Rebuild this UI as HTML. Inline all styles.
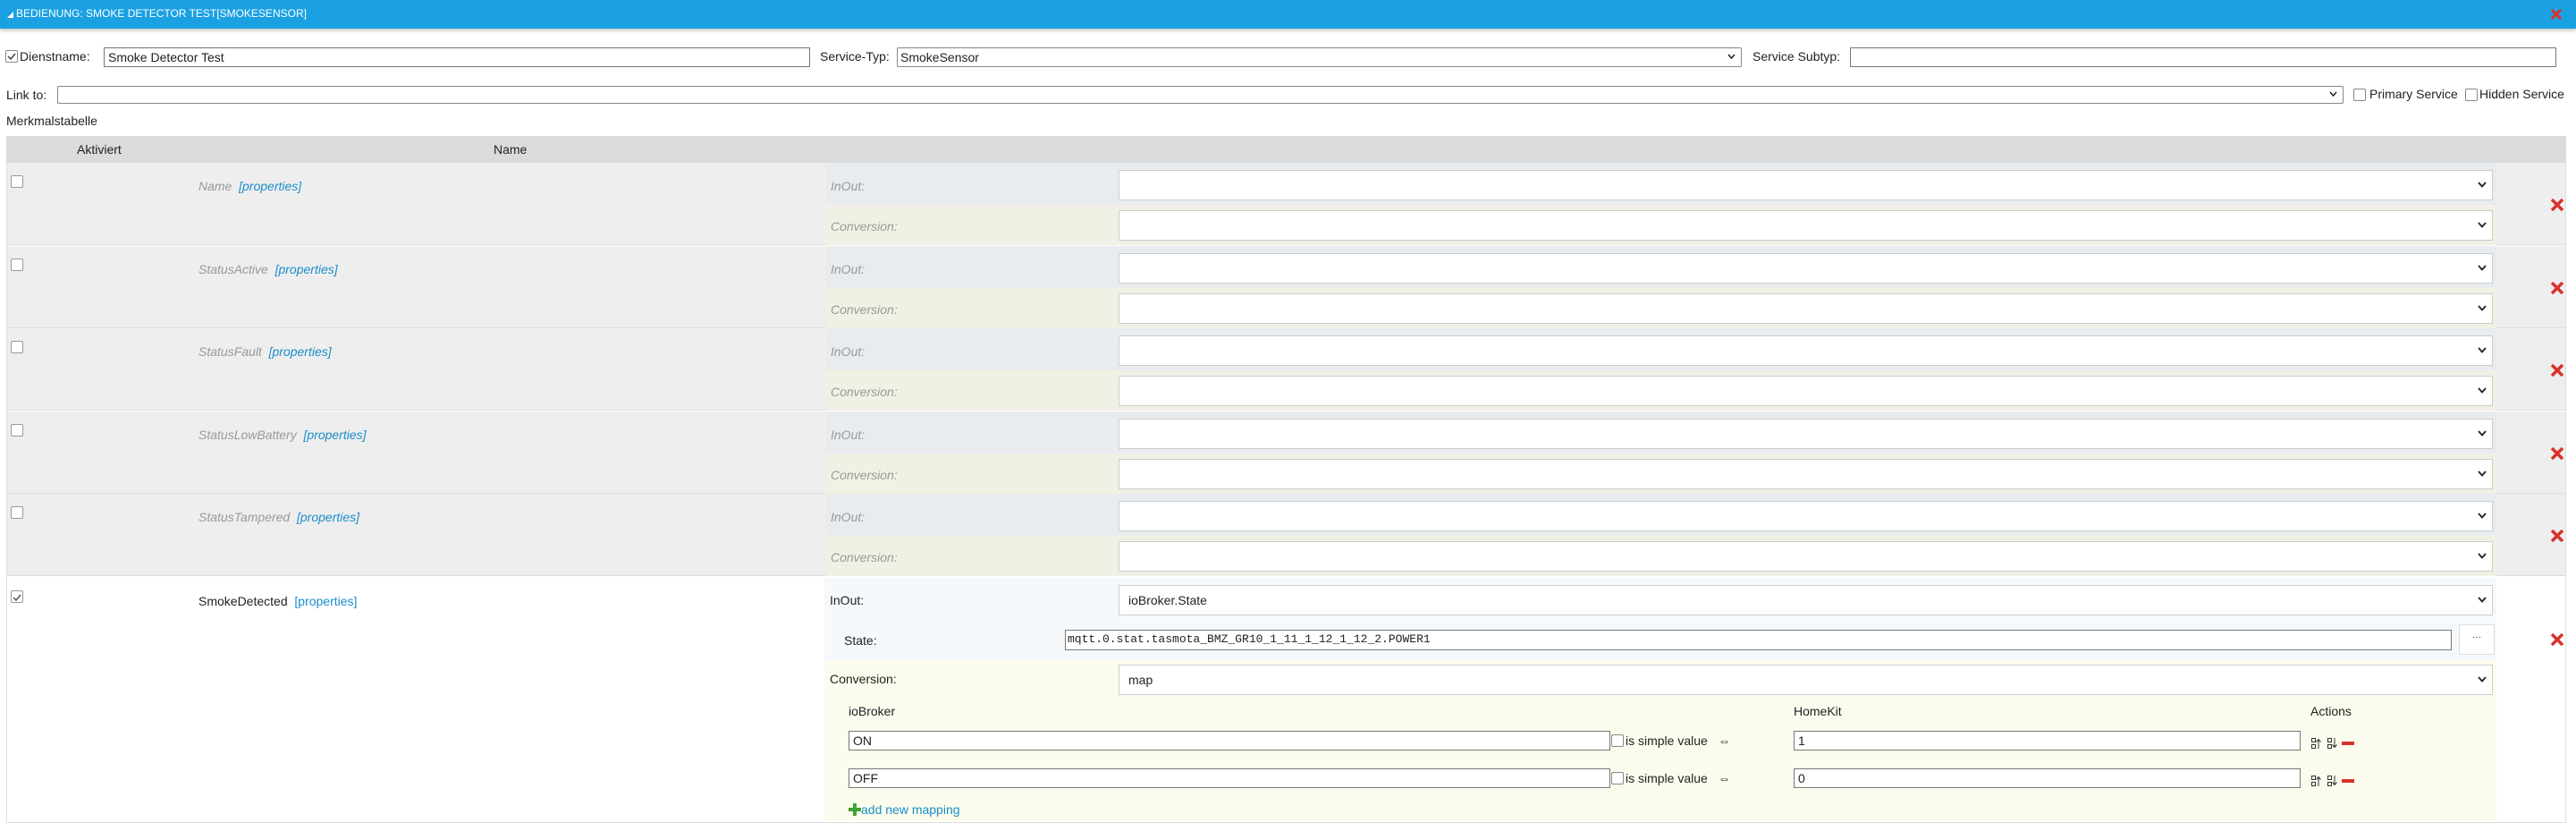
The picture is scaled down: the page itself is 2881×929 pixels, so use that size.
<!DOCTYPE html>
<html><head><meta charset="utf-8"><style>
*{box-sizing:border-box;margin:0;padding:0}
body{width:2881px;height:929px;background:#fff;font-family:"Liberation Sans",sans-serif;font-size:14px;color:#222;position:relative;overflow:hidden}
.a{position:absolute}
.hdr{left:0;top:0;width:2881px;height:32px;background:#1ba1e2;box-shadow:0 2px 4px rgba(0,0,0,.25)}
.inp{position:absolute;border:1px solid #777;background:#fff;font-size:14px;padding:0 4px;line-height:20px;white-space:nowrap;overflow:hidden}
.sel{position:absolute;border:1px solid #ccc;background:#fff;font-size:14px;padding-left:10px;display:flex;align-items:center}
.sel2{position:absolute;border:1px solid #888;background:#fff;font-size:14px;padding-left:3px;display:flex;align-items:center;border-radius:2px}
.chev{position:absolute;right:6px;top:50%;margin-top:-4px}
.cb{position:absolute;width:14px;height:14px;border:1px solid #888;border-radius:2px;background:#fff}
.lbl{position:absolute;white-space:nowrap;line-height:16px}
.it{font-style:italic;color:#999}
.lnk{color:#1a8ccb}
</style></head><body>
<div class="a hdr"></div>
<svg class="a" style="left:8px;top:13px" width="7" height="7"><polygon points="7,0 7,7 0,7" fill="#fff"/></svg>
<div class="lbl" style="left:18px;top:8px;color:#fff;font-size:12px;line-height:14px">BEDIENUNG: SMOKE DETECTOR TEST[SMOKESENSOR]</div>
<svg class="a" style="left:2852px;top:10px" width="14" height="12" viewBox="0 0 16 14"><path d="M2 1L14 13M14 1L2 13" stroke="#d9312b" stroke-width="3.5"/></svg>

<div class="cb" style="left:6px;top:56px"></div>
<svg class="a" style="left:8px;top:59px" width="10" height="8"><path d="M1 4L4 7L9 1" stroke="#444" stroke-width="1.5" fill="none"/></svg>
<div class="lbl" style="left:22px;top:55px">Dienstname:</div>
<div class="inp" style="left:116px;top:53px;width:790px;height:22px">Smoke Detector Test</div>
<div class="lbl" style="left:917px;top:55px">Service-Typ:</div>
<div class="sel2" style="left:1003px;top:53px;width:945px;height:22px">SmokeSensor<svg class="chev" width="9" height="6"><path d="M1 1L4.5 5L8 1" stroke="#222" stroke-width="1.5" fill="none"/></svg></div>
<div class="lbl" style="left:1960px;top:55px">Service Subtyp:</div>
<div class="inp" style="left:2069px;top:53px;width:790px;height:22px"></div>

<div class="lbl" style="left:7px;top:98px">Link to:</div>
<div class="sel2" style="left:64px;top:96px;width:2557px;height:20px"><svg class="chev" width="9" height="6"><path d="M1 1L4.5 5L8 1" stroke="#222" stroke-width="1.5" fill="none"/></svg></div>
<div class="cb" style="left:2632px;top:99px"></div>
<div class="lbl" style="left:2650px;top:97px">Primary Service</div>
<div class="cb" style="left:2757px;top:99px"></div>
<div class="lbl" style="left:2773px;top:97px">Hidden Service</div>

<div class="lbl" style="left:7px;top:127px">Merkmalstabelle</div>

<div class="a" style="left:7px;top:152px;width:2863px;height:30px;background:#dbdbdb"></div>
<div class="lbl" style="left:86px;top:159px">Aktiviert</div>
<div class="lbl" style="left:552px;top:159px">Name</div>

<div class="a" style="left:7px;top:182px;width:2863px;height:738px;border:1px solid #ddd;border-top:none"></div>

<div id="rows"></div>
<script>
var names=["Name","StatusActive","StatusFault","StatusLowBattery","StatusTampered"];
var tops=[182,275,367,460,552];
var h="";
function chev(){return '<svg class="chev" width="10" height="7"><path d="M1 1L5 5.5L9 1" stroke="#222" stroke-width="1.8" fill="none"/></svg>';}
for(var i=0;i<5;i++){var t=tops[i];
h+='<div class="a" style="left:8px;top:'+t+'px;width:2861px;height:92px;background:#eee;border-bottom:1px solid #ddd"></div>';
h+='<div class="a" style="left:924px;top:'+t+'px;width:1868px;height:47px;background:#e8ecef"></div>';
h+='<div class="a" style="left:924px;top:'+(t+47)+'px;width:1868px;height:45px;background:#f0f1e4"></div>';
h+='<div class="cb" style="left:12px;top:'+(t+14)+'px;border-color:#999"></div>';
h+='<div class="lbl it" style="left:222px;top:'+(t+18)+'px">'+names[i]+'&nbsp;&nbsp;<span class="lnk">[properties]</span></div>';
h+='<div class="lbl it" style="left:929px;top:'+(t+18)+'px">InOut:</div>';
h+='<div class="lbl it" style="left:929px;top:'+(t+63)+'px">Conversion:</div>';
h+='<div class="sel" style="left:1251px;top:'+(t+8)+'px;width:1537px;height:34px">'+chev()+'</div>';
h+='<div class="sel" style="left:1251px;top:'+(t+53)+'px;width:1537px;height:34px">'+chev()+'</div>';
h+='<svg class="a" style="left:2852px;top:'+(t+40)+'px" width="16" height="14" viewBox="0 0 16 14"><path d="M2 1L14 13M14 1L2 13" stroke="#d9312b" stroke-width="3.5"/></svg>';
}
document.getElementById("rows").innerHTML=h;
</script>

<div class="a" style="left:922px;top:646px;width:1870px;height:92px;background:#f6f9fc"></div>
<div class="a" style="left:922px;top:738px;width:1870px;height:180px;background:#fbfced"></div>
<div class="cb" style="left:12px;top:660px;border-color:#999"></div>
<svg class="a" style="left:14px;top:664px" width="10" height="8"><path d="M1 4L4 7L9 1" stroke="#555" stroke-width="1.5" fill="none"/></svg>
<div class="lbl" style="left:222px;top:664px">SmokeDetected&nbsp;&nbsp;<span class="lnk">[properties]</span></div>
<div class="lbl" style="left:928px;top:663px">InOut:</div>
<div class="sel" style="left:1251px;top:654px;width:1537px;height:34px">ioBroker.State<svg class="chev" width="10" height="7"><path d="M1 1L5 5.5L9 1" stroke="#222" stroke-width="1.8" fill="none"/></svg></div>
<div class="lbl" style="left:944px;top:708px">State:</div>
<div class="inp" style="left:1191px;top:704px;width:1551px;height:23px;font-family:'Liberation Mono',monospace;font-size:13px;padding-left:2px">mqtt.0.stat.tasmota_BMZ_GR10_1_11_1_12_1_12_2.POWER1</div>
<div class="a" style="left:2750px;top:698px;width:40px;height:34px;border:1px solid #ddd;background:#fff;font-size:10px;text-align:center;line-height:28px">···</div>
<div class="lbl" style="left:928px;top:751px">Conversion:</div>
<div class="sel" style="left:1251px;top:743px;width:1537px;height:34px">map<svg class="chev" width="10" height="7"><path d="M1 1L5 5.5L9 1" stroke="#222" stroke-width="1.8" fill="none"/></svg></div>
<div class="lbl" style="left:949px;top:787px">ioBroker</div>
<div class="lbl" style="left:2006px;top:787px">HomeKit</div>
<div class="lbl" style="left:2584px;top:787px">Actions</div>

<div class="inp" style="left:949px;top:817px;width:852px;height:22px">ON</div>
<div class="cb" style="left:1802px;top:821px"></div>
<div class="lbl" style="left:1818px;top:820px">is simple value&nbsp;&nbsp;&nbsp;⇔</div>
<div class="inp" style="left:2006px;top:817px;width:567px;height:22px">1</div>
<div class="inp" style="left:949px;top:859px;width:852px;height:22px">OFF</div>
<div class="cb" style="left:1802px;top:863px"></div>
<div class="lbl" style="left:1818px;top:862px">is simple value&nbsp;&nbsp;&nbsp;⇔</div>
<div class="inp" style="left:2006px;top:859px;width:567px;height:22px">0</div>

<svg class="a" style="left:2585px;top:824px" width="50" height="14"><g fill="none" stroke="#333" stroke-width="1"><rect x="0.5" y="1.5" width="4" height="4"/><rect x="0.5" y="8.5" width="4" height="4"/><path d="M8 13V3M5.5 5.5L8 2.5L10.5 5.5"/><rect x="18.5" y="1.5" width="4" height="4"/><rect x="18.5" y="8.5" width="4" height="4"/><path d="M26 1V11M23.5 8.5L26 11.5L28.5 8.5"/></g><rect x="34" y="5" width="14" height="4" fill="#d9312b"/></svg>
<svg class="a" style="left:2585px;top:866px" width="50" height="14"><g fill="none" stroke="#333" stroke-width="1"><rect x="0.5" y="1.5" width="4" height="4"/><rect x="0.5" y="8.5" width="4" height="4"/><path d="M8 13V3M5.5 5.5L8 2.5L10.5 5.5"/><rect x="18.5" y="1.5" width="4" height="4"/><rect x="18.5" y="8.5" width="4" height="4"/><path d="M26 1V11M23.5 8.5L26 11.5L28.5 8.5"/></g><rect x="34" y="5" width="14" height="4" fill="#d9312b"/></svg>

<svg class="a" style="left:949px;top:898px" width="14" height="14"><path d="M7 0V14M0 7H14" stroke="#3fa535" stroke-width="4"/></svg>
<div class="lbl lnk" style="left:963px;top:897px">add new mapping</div>

<svg class="a" style="left:2852px;top:708px" width="16" height="14" viewBox="0 0 16 14"><path d="M2 1L14 13M14 1L2 13" stroke="#d9312b" stroke-width="3.5"/></svg>
</body></html>
